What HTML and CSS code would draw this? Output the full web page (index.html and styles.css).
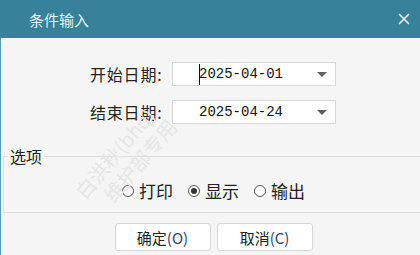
FILE: index.html
```html
<!DOCTYPE html>
<html>
<head>
  <title>条件输入</title>
  <link rel="stylesheet" href="styles.css">
</head>
<body>
  <div class="dialog">
    <div class="titlebar">
      <span class="title">条件输入</span>
      <svg class="close" width="12" height="12" viewBox="0 0 12 12">
        <path d="M1 1 L11 11 M11 1 L1 11" stroke="#e8f1f4" stroke-width="1.6" fill="none"/>
      </svg>
    </div>

    <div class="content">
      <div class="date-rows">
        <div class="date-row">
          <label class="date-label">开始日期:</label>
          <div class="combo">
            <span class="caret"></span>
            <span class="combo-value">2025-04-01</span>
            <span class="combo-arrow"></span>
          </div>
        </div>
        <div class="date-row">
          <label class="date-label">结束日期:</label>
          <div class="combo">
            <span class="combo-value">2025-04-24</span>
            <span class="combo-arrow"></span>
          </div>
        </div>
      </div>

      <fieldset class="options">
        <legend>选项</legend>
        <div class="radio-group">
          <label class="radio"><span class="radio-dot"></span>打印</label>
          <label class="radio"><span class="radio-dot checked"></span>显示</label>
          <label class="radio"><span class="radio-dot"></span>输出</label>
        </div>
      </fieldset>

      <div class="buttons">
        <button class="btn">确定<span class="hot">(O)</span></button>
        <button class="btn">取消<span class="hot">(C)</span></button>
      </div>
    </div>

    <div class="watermark">
      <div>白洪秋(bhq)</div>
      <div>维护部专用</div>
    </div>
  </div>
</body>
</html>
```

FILE: styles.css
```css
*, *::before, *::after {
  box-sizing: border-box;
}

body {
  margin: 0;
  padding: 0;
  background: #f5f5f5;
  font-family: "Noto Sans CJK SC", "Noto Sans", sans-serif;
  overflow: hidden;
}

.dialog {
  position: relative;
  width: 420px;
  height: 255px;
  overflow: hidden;
}

.titlebar {
  height: 38px;
  background: #37829a;
  display: flex;
  align-items: center;
  justify-content: space-between;
  padding: 0 10px 0 29px;
}

.title {
  color: #e9f1f3;
  font-size: 15px;
}

.content {
  height: 217px;
  border-left: 1px solid #5b9fb2;
  background: #f5f5f5;
  padding-top: 24px;
}

.date-rows {
  display: flex;
  flex-direction: column;
  gap: 14px;
  padding-left: 89px;
}

.date-row {
  display: flex;
  align-items: center;
}

.date-label {
  width: 82px;
  font-size: 16px;
  color: #222;
  letter-spacing: 0.8px;
}

.combo {
  position: relative;
  width: 164px;
  height: 24px;
  background: #fff;
  border: 1px solid #d8d8d8;
  display: flex;
  align-items: center;
  padding-left: 26px;
}

.caret {
  position: absolute;
  left: 26px;
  top: 1px;
  width: 1px;
  height: 21px;
  background: #111;
}

.combo-value {
  font-family: "Liberation Mono", monospace;
  font-size: 14px;
  color: #111;
}

.combo-arrow {
  position: absolute;
  right: 8px;
  top: 9px;
  width: 0;
  height: 0;
  border-left: 5px solid transparent;
  border-right: 5px solid transparent;
  border-top: 5px solid #5a6358;
}

.options {
  margin: 23px -10px 0 2px;
  padding: 0 0 12px;
  border: 1px solid #dedede;
  height: 66px;
}

.options legend {
  padding: 0 2px;
  margin-left: 4px;
  font-size: 16px;
  color: #222;
  line-height: 18px;
}

.radio-group {
  display: flex;
  justify-content: center;
  gap: 15px;
  padding-top: 13px;
  padding-right: 6px;
}

.radio {
  display: flex;
  align-items: center;
  gap: 5px;
  font-size: 17px;
  color: #222;
}

.radio-dot {
  width: 12px;
  height: 12px;
  border: 1px solid #555;
  border-radius: 50%;
  background: #fff;
  display: flex;
  align-items: center;
  justify-content: center;
}

.radio-dot.checked::after {
  content: "";
  width: 6px;
  height: 6px;
  border-radius: 50%;
  background: #333;
}

.buttons {
  display: flex;
  justify-content: center;
  gap: 6px;
  margin-top: 10px;
  padding-left: 6px;
}

.btn {
  width: 96px;
  height: 28px;
  background: #fff;
  border: 1px solid #d6d6d6;
  border-radius: 3px;
  font-family: "Noto Sans CJK SC", "Noto Sans", sans-serif;
  font-size: 15px;
  color: #222;
  padding: 0;
}

.hot {
  color: #2c3e78;
}

.watermark {
  position: absolute;
  left: 70px;
  top: 188px;
  transform: rotate(-50deg);
  transform-origin: left top;
  font-size: 20px;
  line-height: 24px;
  color: #e6e6e6;
  pointer-events: none;
}

.watermark div:last-child {
  padding-left: 16px;
}
```
